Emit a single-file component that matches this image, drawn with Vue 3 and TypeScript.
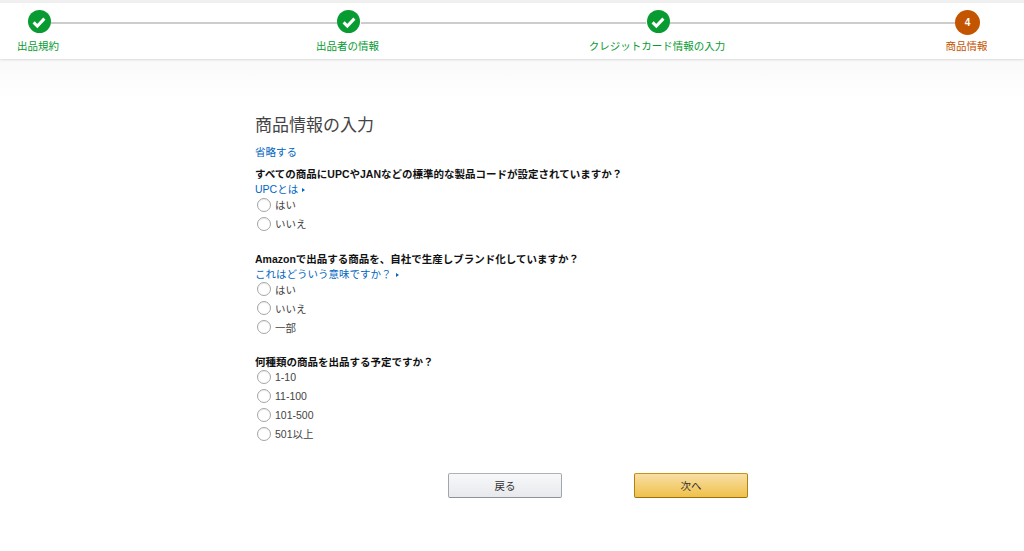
<template>
  <div class="page">
    <div class="stepper">
      <template v-for="(step, i) in steps" :key="step.label">
        <div v-if="i > 0" class="connector"></div>
        <div class="step" :class="{ current: step.current }">
          <div class="badge">
            <span v-if="step.current">{{ i + 1 }}</span>
            <svg v-else width="16" height="16" viewBox="0 0 16 16">
              <path d="M2.6 8.4 L6.3 12 L13.4 4.6" fill="none" stroke="#fff" stroke-width="3" />
            </svg>
          </div>
          <div class="step-label">{{ step.label }}</div>
        </div>
      </template>
    </div>
    <div class="fade"></div>

    <div class="content">
      <h1>商品情報の入力</h1>
      <a class="skip">省略する</a>

      <section v-for="q in questions" :key="q.title" class="question">
        <div class="q-title">{{ q.title }}</div>
        <a v-if="q.help" class="help">{{ q.help }}<i class="caret"></i></a>
        <div class="options">
          <label v-for="opt in q.options" :key="opt" class="option">
            <span class="radio"></span>
            <span>{{ opt }}</span>
          </label>
        </div>
      </section>

      <div class="actions">
        <button class="btn back">戻る</button>
        <button class="btn next">次へ</button>
      </div>
    </div>
  </div>
</template>

<script setup lang="ts">
const steps = [
  { label: '出品規約', current: false },
  { label: '出品者の情報', current: false },
  { label: 'クレジットカード情報の入力', current: false },
  { label: '商品情報', current: true },
];

const questions = [
  {
    title: 'すべての商品にUPCやJANなどの標準的な製品コードが設定されていますか？',
    help: 'UPCとは',
    options: ['はい', 'いいえ'],
  },
  {
    title: 'Amazonで出品する商品を、自社で生産しブランド化していますか？',
    help: 'これはどういう意味ですか？',
    options: ['はい', 'いいえ', '一部'],
  },
  {
    title: '何種類の商品を出品する予定ですか？',
    help: '',
    options: ['1-10', '11-100', '101-500', '501以上'],
  },
];
</script>

<style>
html,
body {
  margin: 0;
  background: #fff;
  overflow: hidden;
}
</style>

<style scoped>
.page {
  height: 551px;
  font-family: "Liberation Sans", "Noto Sans CJK JP", sans-serif;
  font-size: 10.5px;
  color: #333;
  border-top: 3px solid #f0f0f0;
  box-sizing: border-box;
}

.stepper {
  display: flex;
  height: 56px;
  padding: 7px 44.5px 0 27px;
  box-sizing: border-box;
  background: #fff;
  box-shadow: 0 1px 2px rgba(0, 0, 0, 0.12);
  position: relative;
}

.connector {
  flex: 1;
  height: 2px;
  margin-top: 12px;
  background: #ccc;
}

.step {
  width: 24px;
  display: flex;
  flex-direction: column;
  align-items: center;
}

.badge {
  width: 23px;
  height: 23px;
  flex: none;
  border-radius: 50%;
  background: #079b32;
  display: flex;
  align-items: center;
  justify-content: center;
  color: #fff;
  font-size: 10px;
  font-weight: bold;
}

.step.current .badge {
  width: 25px;
  height: 25px;
  background: #c45500;
}

.step-label {
  margin-top: 6px;
  margin-right: 2px;
  white-space: nowrap;
  line-height: 14px;
  color: #079b32;
}

.step.current .step-label {
  margin-top: 4px;
  color: #c45500;
}

.fade {
  height: 40px;
  background: linear-gradient(#f9f9f9, #fff);
}

.content {
  width: 500px;
  margin-left: 255px;
  padding-top: 15px;
}

h1 {
  margin: 0;
  font-size: 17px;
  font-weight: normal;
  line-height: 24px;
  color: #444;
}

.skip,
.help {
  display: block;
  color: #0066c0;
  line-height: 14px;
}

.skip {
  margin-top: 7px;
}

.question {
  margin-top: 7px;
  margin-bottom: 17.5px;
}

.question + .question {
  margin-top: 0;
}

.q-title {
  font-weight: bold;
  color: #111;
  line-height: 16px;
}

.help {
  margin-bottom: 2px;
}

.options {
  margin-top: -3px;
}

.caret {
  display: inline-block;
  margin-left: 4px;
  vertical-align: 1px;
  border-left: 3px solid #0066c0;
  border-top: 2.5px solid transparent;
  border-bottom: 2.5px solid transparent;
}

.option {
  display: flex;
  align-items: center;
  gap: 4px;
  height: 19px;
  padding-left: 2px;
  color: #444;
}

.radio {
  width: 12px;
  height: 12px;
  border: 1px solid #a6a6a6;
  border-radius: 50%;
  background: #fff;
  box-shadow: inset 0 1px 1px rgba(0, 0, 0, 0.08);
}

.actions {
  display: flex;
  gap: 72px;
  margin-left: 193px;
  margin-top: 30px;
}

.btn {
  width: 114px;
  height: 25px;
  padding: 0;
  border-radius: 2px;
  font: inherit;
  color: #333;
  border: 1px solid;
}

.back {
  border-color: #adb1b8 #a2a6ac #8d9096;
  background: linear-gradient(#f7f8fa, #e7e9ec);
}

.next {
  border-color: #c89411 #b0820f #99710d;
  background: linear-gradient(#f7dfa5, #f0c14b);
}
</style>
